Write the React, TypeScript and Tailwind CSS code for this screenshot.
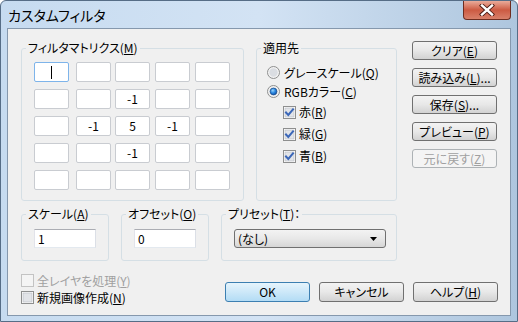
const jp = "font-['Noto_Sans_CJK_JP',sans-serif] [font-feature-settings:'palt']";

const Key = ({ k }: { k: string }) => <span className="underline underline-offset-1">{k}</span>;

const CheckBox = ({ checked = false, disabled = false }: { checked?: boolean; disabled?: boolean }) => (
  <svg width="13" height="13" viewBox="0 0 13 13" className="shrink-0">
    <rect x="0.5" y="0.5" width="12" height="12" fill={disabled ? '#f4f4f4' : '#ffffff'} stroke={disabled ? '#c3c3c3' : '#8e8f8f'} />
    {!disabled && <rect x="2" y="2" width="9" height="9" fill="#e2e4e8" stroke="#b6bac0" strokeWidth="0.6" />}
    {checked && (
      <path d="M3 6.5 L5.3 9 L10 3.3" fill="none" stroke="#3b67b8" strokeWidth="2" strokeLinecap="square" />
    )}
  </svg>
);

const Radio = ({ checked = false }: { checked?: boolean }) => (
  <svg width="13" height="13" viewBox="0 0 13 13" className="shrink-0">
    <defs>
      <radialGradient id="rb" cx="0.4" cy="0.35" r="0.7">
        <stop offset="0" stopColor="#9ad4fb" />
        <stop offset="0.5" stopColor="#2c8ae3" />
        <stop offset="1" stopColor="#0b4ea8" />
      </radialGradient>
    </defs>
    <circle cx="6.5" cy="6.5" r="6" fill="#f2f2f2" stroke="#8e8f8f" />
    <circle cx="6.5" cy="6.5" r="4.2" fill="#dadde2" />
    {checked && <circle cx="6.5" cy="6.5" r="3.4" fill="url(#rb)" stroke="#1c4d8c" strokeWidth="0.7" />}
  </svg>
);

const Btn = ({ children, disabled = false, def = false, className = '' }: { children: React.ReactNode; disabled?: boolean; def?: boolean; className?: string }) => (
  <div
    className={
      'flex w-[85px] items-center justify-center rounded-[3px] border text-[12px] leading-none whitespace-nowrap ' +
      (def
        ? 'border-[#3c7fb1] bg-linear-to-b from-[#e6f4fc] to-[#b3dcf5] text-black '
        : disabled
          ? 'border-[#adb2b5] bg-[#f4f4f4] text-[#a0a0a0] '
          : 'border-[#707070] bg-linear-to-b from-[#f3f3f3] via-[#e8e8e8] to-[#d2d2d2] text-black ') +
      className
    }
  >
    {children}
  </div>
);

const Cell = ({ v, focus = false }: { v?: string; focus?: boolean }) => (
  <div
    className={
      'flex h-[20px] w-[35px] items-center justify-center rounded-[2px] border bg-white text-[12px] leading-none ' +
      (focus ? 'border-[#7eb4ea]' : 'border-[#c9ccd1]')
    }
  >
    {focus ? <span className="h-[13px] w-px bg-black" /> : v}
  </div>
);

const matrix = [
  ['', '', '', '', ''],
  ['', '', '-1', '', ''],
  ['', '-1', '5', '-1', ''],
  ['', '', '-1', '', ''],
  ['', '', '', '', ''],
];

export default function App() {
  return (
    <div className={'flex h-[322px] w-[518px] flex-col overflow-hidden rounded-t-[6px] border border-[#566d86] bg-linear-to-r from-[#c6dbf0] via-[#d3e3f4] to-[#aec6de] text-black ' + jp}>
      {/* タイトルバー */}
      <div className="flex h-[27px] shrink-0 items-start">
        <div className="pl-[7px] pt-[6px] text-[14px] leading-[17px] text-black">カスタムフィルタ</div>
        <div className="mr-[6px] ml-auto flex h-[19px] w-[48px] items-center justify-center rounded-b-[4px] border border-t-0 border-[#6e2d20] bg-linear-to-b from-[#e9ab9a] via-[#cc5a42] to-[#d8806a]">
          <svg width="16" height="12" viewBox="0 0 16 12">
            <path d="M3 1.5 L13 10.5 M13 1.5 L3 10.5" stroke="#4a1a12" strokeWidth="4.2" strokeLinecap="square" />
            <path d="M3 1.5 L13 10.5 M13 1.5 L3 10.5" stroke="#ffffff" strokeWidth="2.4" strokeLinecap="square" />
          </svg>
        </div>
      </div>

      {/* クライアント領域 */}
      <div className="mx-[6px] flex h-[288px] shrink-0 flex-col border border-[#8598ad] bg-[#f0f0f0] pt-[12px] pr-[12px] pl-[13px] text-[12px] leading-[14px]">
        {/* 上段 */}
        <div className="flex items-start">
          <fieldset className="h-[160px] w-[223px] rounded-[3px] border border-[#d5dfe5] pt-[7px] pl-[12px]">
            <legend className="ml-[-8px] px-[2px] whitespace-nowrap">
              フィルタマトリクス(<Key k="M" />)
            </legend>
            <div className="flex flex-col gap-[7px]">
              {matrix.map((row, r) => (
                <div key={r} className="flex">
                  {row.map((v, c) => (
                    <div key={c} className={c === 0 ? '' : c === 1 ? 'ml-[7px]' : c === 2 ? 'ml-[4px]' : 'ml-[5px]'}>
                      <Cell v={v} focus={r === 0 && c === 0} />
                    </div>
                  ))}
                </div>
              ))}
            </div>
          </fieldset>

          <fieldset className="ml-[12px] h-[160px] w-[141px] rounded-[3px] border border-[#d5dfe5] pt-[8px] pl-[10px]">
            <legend className="ml-[-6px] px-[2px] whitespace-nowrap">適用先</legend>
            <div className="flex h-[19px] items-center gap-[4px] whitespace-nowrap">
              <Radio />
              <span>グレースケール(<Key k="Q" />)</span>
            </div>
            <div className="flex h-[19px] items-center gap-[4px] whitespace-nowrap">
              <Radio checked />
              <span>RGBカラー(<Key k="C" />)</span>
            </div>
            {[
              ['赤', 'R'],
              ['緑', 'G'],
              ['青', 'B'],
            ].map(([t, k]) => (
              <div key={k} className="ml-[16px] flex h-[22px] items-center gap-[3px]">
                <CheckBox checked />
                <span>
                  {t}(<Key k={k} />)
                </span>
              </div>
            ))}
          </fieldset>

          <div className="ml-[15px] flex flex-col gap-[8px]">
            <Btn className="h-[19px]">
              クリア(<Key k="E" />)
            </Btn>
            <Btn className="h-[19px]">
              読み込み(<Key k="L" />)...
            </Btn>
            <Btn className="h-[19px]">
              保存(<Key k="S" />)...
            </Btn>
            <Btn className="h-[19px]">
              プレビュー(<Key k="P" />)
            </Btn>
            <Btn disabled className="h-[19px]">
              元に戻す(<Key k="Z" />)
            </Btn>
          </div>
        </div>

        {/* 中段 */}
        <div className="mt-[6px] flex items-start gap-[12px]">
          <fieldset className="h-[54px] w-[88px] rounded-[3px] border border-[#d5dfe5] pt-[8px] pl-[12px]">
            <legend className="ml-[-8px] px-[2px] whitespace-nowrap">
              スケール(<Key k="A" />)
            </legend>
            <div className="flex h-[19px] w-[62px] items-center border border-[#abadb3] border-r-[#dbdfe6] border-b-[#e3e9ef] border-l-[#e2e3ea] bg-white pl-[3px] leading-none">1</div>
          </fieldset>
          <fieldset className="h-[54px] w-[88px] rounded-[3px] border border-[#d5dfe5] pt-[8px] pl-[12px]">
            <legend className="ml-[-8px] px-[2px] whitespace-nowrap">
              オフセット(<Key k="O" />)
            </legend>
            <div className="flex h-[19px] w-[62px] items-center border border-[#abadb3] border-r-[#dbdfe6] border-b-[#e3e9ef] border-l-[#e2e3ea] bg-white pl-[3px] leading-none">0</div>
          </fieldset>
          <fieldset className="h-[54px] w-[176px] rounded-[3px] border border-[#d5dfe5] pt-[8px] pl-[12px]">
            <legend className="ml-[-8px] px-[2px] whitespace-nowrap">
              プリセット(<Key k="T" />)：
            </legend>
            <div className="flex h-[19px] w-[152px] items-center rounded-[3px] border border-[#707070] bg-linear-to-b from-[#f3f3f3] via-[#e8e8e8] to-[#d6d6d6] pr-[8px] pl-[3px] leading-none">
              <span>(なし)</span>
              <svg width="7" height="4" viewBox="0 0 7 4" className="ml-auto">
                <path d="M0 0 H7 L3.5 4 Z" fill="#000" />
              </svg>
            </div>
          </fieldset>
        </div>

        {/* 下段 */}
        <div className="flex items-start">
          <div className="mt-[11px] flex flex-col">
            <div className="flex h-[17px] items-center gap-[3px] text-[#a0a0a0]">
              <CheckBox disabled />
              <span>
                全レイヤを処理(<Key k="Y" />)
              </span>
            </div>
            <div className="flex h-[17px] items-center gap-[3px]">
              <CheckBox />
              <span>
                新規画像作成(<Key k="N" />)
              </span>
            </div>
          </div>
          <div className="mt-[21px] ml-auto flex gap-[9px]">
            <Btn def className="h-[20px]">
              OK
            </Btn>
            <Btn className="h-[20px]">キャンセル</Btn>
            <Btn className="h-[20px]">
              ヘルプ(<Key k="H" />)
            </Btn>
          </div>
        </div>
      </div>
    </div>
  );
}
